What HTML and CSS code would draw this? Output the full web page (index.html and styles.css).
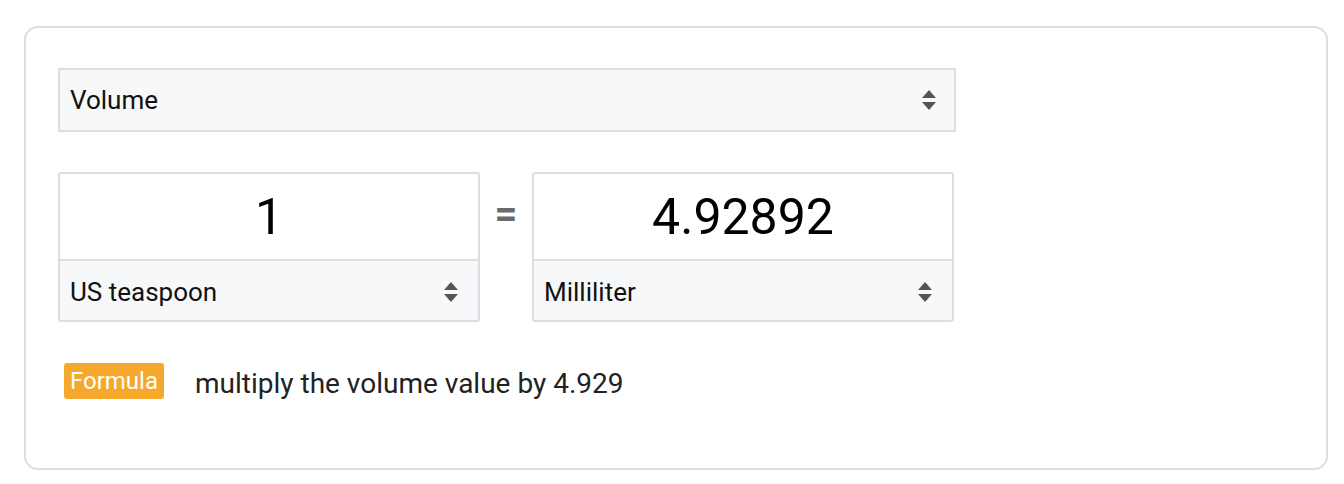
FILE: index.html
```html
<html>
<head>
  <title>Volume converter</title>
  <link rel="stylesheet" href="styles.css">
</head>
<body>
    <div class="card">
        <div class="picker picker_wide">
            <span>Volume</span>
            <svg class="arrows" width="14" height="22" viewBox="0 0 14 22"><path d="M7 1 L14 9 L0 9 Z M0 13 L14 13 L7 21 Z" fill="#555"/></svg>
        </div>

        <div class="convert_row">
            <div class="unit_box">
                <div class="unit_value">1</div>
                <div class="picker picker_unit">
                    <span>US teaspoon</span>
                    <svg class="arrows" width="14" height="22" viewBox="0 0 14 22"><path d="M7 1 L14 9 L0 9 Z M0 13 L14 13 L7 21 Z" fill="#555"/></svg>
                </div>
            </div>
            <div class="equals">=</div>
            <div class="unit_box">
                <div class="unit_value">4.92892</div>
                <div class="picker picker_unit">
                    <span>Milliliter</span>
                    <svg class="arrows" width="14" height="22" viewBox="0 0 14 22"><path d="M7 1 L14 9 L0 9 Z M0 13 L14 13 L7 21 Z" fill="#555"/></svg>
                </div>
            </div>
        </div>

        <div class="formula_row">
            <span class="badge">Formula</span>
            <span class="formula_text">multiply the volume value by 4.929</span>
        </div>
    </div>
</body>
</html>
```

FILE: styles.css
```css
body {
    margin: 0px;
    padding: 26px 16px 0px 24px;
    font-family: Roboto, "Liberation Sans", sans-serif;
    background-color: #fff;
}

.card {
    border: 2px solid #dddde2;
    border-radius: 14px;
    height: 444px;
    box-sizing: border-box;
    padding: 40px 32px;
}

.picker {
    display: flex;
    align-items: center;
    justify-content: space-between;
    background-color: #f7f8fa;
    font-size: 26px;
    color: #111;
    box-sizing: border-box;
}

.picker_wide {
    width: 898px;
    height: 64px;
    border: 2px solid #dddde2;
    padding: 0px 18px 0px 10px;
}

.picker_unit {
    height: 63px;
    border-top: 2px solid #dddde2;
    padding: 0px 20px 0px 10px;
}

.arrows {
    display: block;
}

.convert_row {
    display: flex;
    align-items: flex-start;
    margin-top: 40px;
}

.unit_box {
    width: 422px;
    height: 150px;
    box-sizing: border-box;
    border: 2px solid #dddde2;
    border-radius: 3px;
    overflow: hidden;
}

.unit_value {
    height: 85px;
    display: flex;
    align-items: center;
    justify-content: center;
    font-size: 50px;
    color: #000;
}

.equals {
    width: 52px;
    padding-top: 18px;
    text-align: center;
    font-size: 40px;
    font-weight: bold;
    color: #6a6a6e;
}

.formula_row {
    display: flex;
    align-items: center;
    margin-top: 39px;
    padding-left: 6px;
}

.badge {
    display: inline-block;
    width: 100px;
    height: 36px;
    line-height: 36px;
    text-align: center;
    background-color: #f5a82c;
    color: #fff;
    font-size: 24px;
    border-radius: 3px;
}

.formula_text {
    margin-left: 31px;
    margin-top: 6px;
    font-size: 28px;
    color: #222;
}
```
